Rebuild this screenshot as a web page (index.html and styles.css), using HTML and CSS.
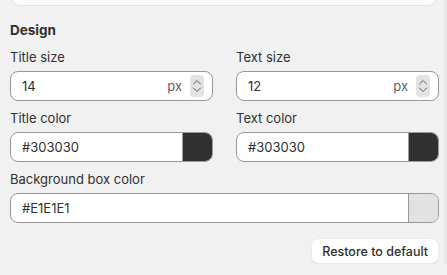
FILE: index.html
```html
<!DOCTYPE html>
<html lang="en">
<head>
  <meta charset="UTF-8" />
  <meta name="viewport" content="width=device-width, initial-scale=1.0"/>
  <title>Design settings</title>
  <link rel="stylesheet" href="styles.css">
</head>
<body>
  <div class="panel">
    <div class="card-end"></div>

    <h2>Design</h2>

    <div class="grid">
      <div class="field">
        <label for="titleSize">Title size</label>
        <div class="input">
          <input type="text" id="titleSize" value="14" />
          <span class="suffix">px</span>
          <span class="spinner">
            <svg width="10" height="18" viewBox="0 0 10 18"><path d="M1.5 7l3.5-3.5 3.5 3.5M1.5 11l3.5 3.5 3.5-3.5" fill="none" stroke="#5c5c5c" stroke-width="1" stroke-linecap="round" stroke-linejoin="round"/></svg>
          </span>
        </div>
      </div>

      <div class="field">
        <label for="textSize">Text size</label>
        <div class="input">
          <input type="text" id="textSize" value="12" />
          <span class="suffix">px</span>
          <span class="spinner">
            <svg width="10" height="18" viewBox="0 0 10 18"><path d="M1.5 7l3.5-3.5 3.5 3.5M1.5 11l3.5 3.5 3.5-3.5" fill="none" stroke="#5c5c5c" stroke-width="1" stroke-linecap="round" stroke-linejoin="round"/></svg>
          </span>
        </div>
      </div>

      <div class="field">
        <label for="titleColor">Title color</label>
        <div class="input color">
          <input type="text" id="titleColor" value="#303030" />
          <span class="swatch dark"></span>
        </div>
      </div>

      <div class="field">
        <label for="textColor">Text color</label>
        <div class="input color">
          <input type="text" id="textColor" value="#303030" />
          <span class="swatch dark"></span>
        </div>
      </div>

      <div class="field wide">
        <label for="boxColor">Background box color</label>
        <div class="input color">
          <input type="text" id="boxColor" value="#E1E1E1" />
          <span class="swatch light"></span>
        </div>
      </div>
    </div>

    <div class="actions">
      <button>Restore to default</button>
    </div>
  </div>
</body>
</html>
```

FILE: styles.css
```css
body {
  margin: 0;
  font-family: Inter, 'Noto Sans', sans-serif;
  font-size: 13px;
  color: #303030;
  background: #f1f1f1;
  overflow: hidden;
}

.panel {
  padding: 0 5px 0 10px;
  border-right: 3px solid #e8e8e8;
  min-height: 275px;
  box-sizing: border-box;
}

.card-end {
  height: 16px;
  margin: -12px 2px 0 1px;
  background: #fafafa;
  border: 1px solid #e3e3e3;
  border-radius: 12px;
}

h2 {
  font-size: 13.5px;
  font-weight: 650;
  line-height: 20px;
  margin: 14px 0 7px;
}

.grid {
  display: grid;
  grid-template-columns: minmax(0, 1fr) minmax(0, 1fr);
  column-gap: 23px;
  row-gap: 7px;
}

.field {
  min-width: 0;
}

.field.wide {
  grid-column: 1 / 3;
}

label {
  display: block;
  line-height: 20px;
  margin-bottom: 4px;
}

.input {
  display: flex;
  align-items: center;
  height: 30px;
  box-sizing: border-box;
  background: #fff;
  border: 1px solid #999;
  border-radius: 8px;
  overflow: hidden;
}

.input input {
  flex: 1;
  width: 0;
  min-width: 0;
  border: none;
  outline: none;
  background: none;
  font: inherit;
  color: #303030;
  padding: 0 0 0 11px;
}

.suffix {
  color: #616161;
  margin-right: 8px;
}

.spinner {
  display: flex;
  align-items: center;
  justify-content: center;
  width: 14px;
  height: 22px;
  margin-right: 8px;
  background: #e3e3e3;
  border-radius: 4px;
}

.swatch {
  align-self: stretch;
  width: 29px;
  border-left: 1px solid #999;
}

.swatch.dark {
  background: #303030;
}

.swatch.light {
  background: #e1e1e1;
}

.actions {
  display: flex;
  justify-content: flex-end;
  margin-top: 15px;
}

button {
  font: inherit;
  font-size: 12.5px;
  font-weight: 550;
  color: #303030;
  background: #fff;
  border: none;
  border-radius: 8px;
  padding: 0 11px;
  height: 26px;
  box-shadow: 0 1px 0 #e3e3e3, 0 0 0 1px #ebebeb inset, 0 -1px 0 #d4d4d4 inset;
  cursor: pointer;
}
```
